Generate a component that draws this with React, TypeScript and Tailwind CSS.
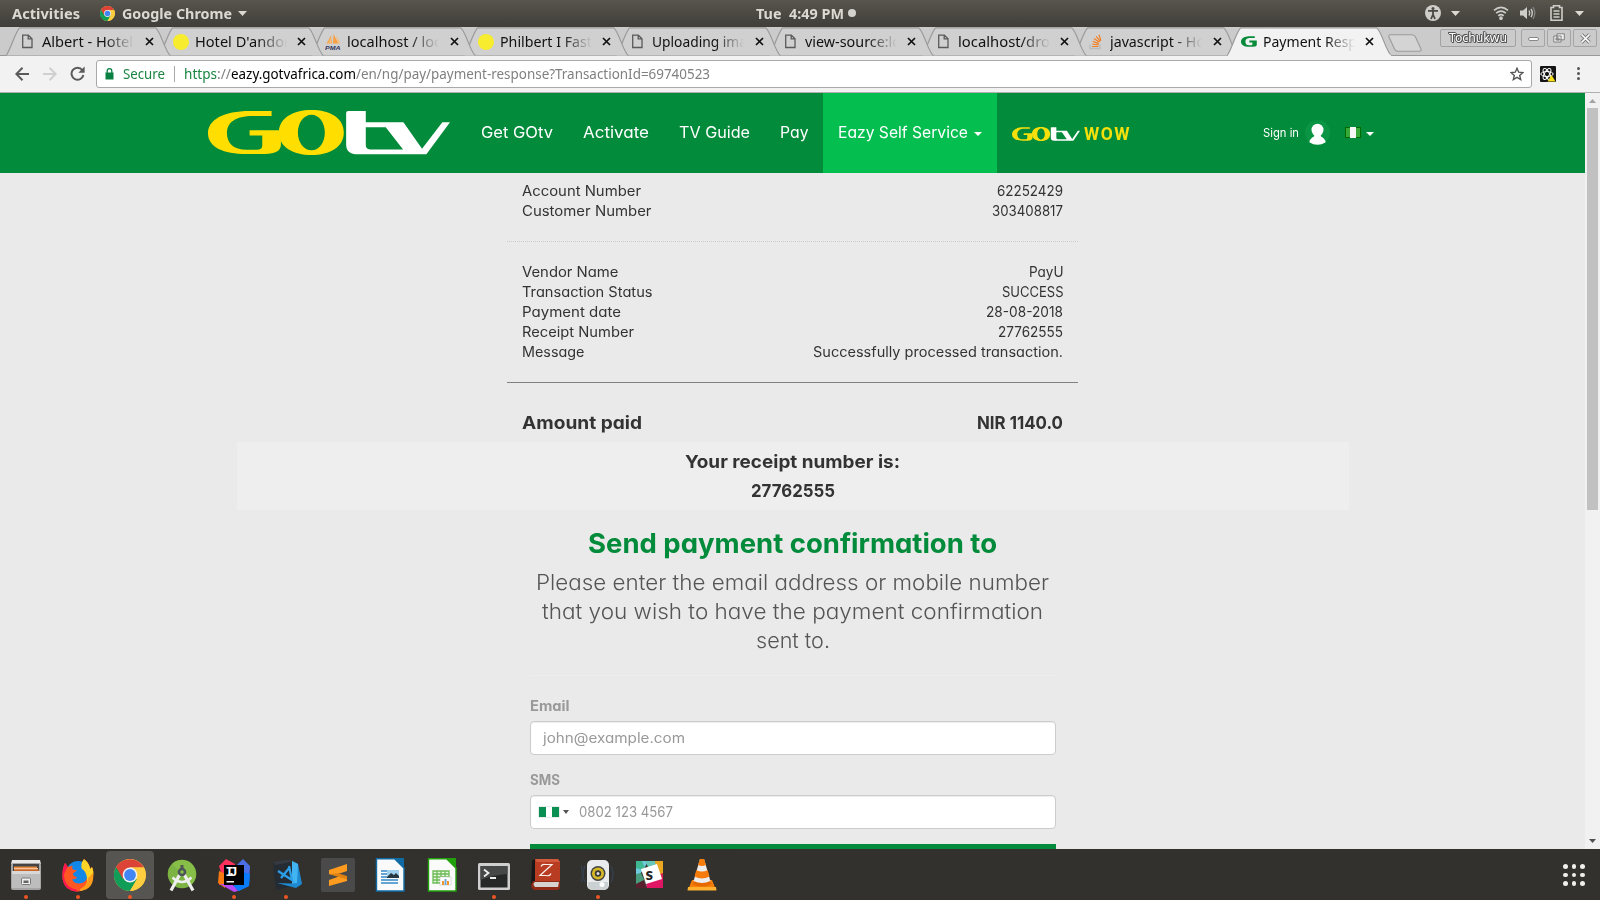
import { useLayoutEffect, useRef } from "react";
import type { ReactNode } from "react";

const POP = "font-['Inter','Open_Sans',sans-serif] [font-feature-settings:'cv11']";
const UBU = "font-['Noto_Sans','Open_Sans',sans-serif]";

/** Text widened or narrowed so that it fills exactly `w` pixels. */
function Fit({ w, children, className = "" }: { w: number; children: string; className?: string }) {
  const ref = useRef<HTMLSpanElement>(null);
  useLayoutEffect(() => {
    const el = ref.current;
    if (el && el.offsetWidth) {
      el.style.transform = "none";
      el.style.transform = `scaleX(${w / el.getBoundingClientRect().width})`;
    }
  }, [w, children]);
  return (
    <span className={`inline-block shrink-0 whitespace-pre text-left ${className}`} style={{ width: w }}>
      <span ref={ref} className="inline-block origin-left">{children}</span>
    </span>
  );
}

function ChromeLogo({ size }: { size: number }) {
  return (
    <svg width={size} height={size} viewBox="0 0 32 32">
      <circle cx="16" cy="16" r="16" fill="#ffcd40" />
      <path d="M16 16 2.1 8A16 16 0 0 0 16 32l7-12z" fill="#0f9d58" />
      <path d="M2.1 8A16 16 0 0 1 29.9 8.500H16L9 20z" fill="#db4437" />
      <path d="M29.900 8.500H16v7l7 4.500-7 12A16 16 0 0 0 29.900 8.500z" fill="#ffcd40" />
      <circle cx="16" cy="16" r="7.400" fill="#f1f1f1" />
      <circle cx="16" cy="16" r="5.900" fill="#4285f4" />
    </svg>
  );
}

function GotvLogo({ className, yellow = "#ffde00" }: { className: string; yellow?: string }) {
  return (
    <svg className={className} viewBox="54 60 727 136" preserveAspectRatio="none">
      <path fill={yellow} d="M245 63H180C100 63 54 90 54 130C54 172 100 193 170 193H225C258 193 273 182 273 165V121H179V137H217V168Q217 180 200 180H170C130 180 111 160 111 130C111 98 135 78 190 78H245Z" />
      <path fill={yellow} fillRule="evenodd" d="M267 128C267 84 310 60 365 60S462 84 462 128S420 196 365 196S267 172 267 128ZM324 128C324 158 342 182 365 182S405 158 405 128S388 74 365 74S324 98 324 128Z" />
      <path fill="#fff" fillRule="evenodd" d="M475 63H528V97H641L697 177L758 97H781L710 194H505C480 194 469 183 469 165V69Q469 63 475 63ZM528 112V165Q528 179 541 179H640L588 112Z" />
    </svg>
  );
}

const Caret = ({ className = "" }: { className?: string }) => (
  <svg className={className} viewBox="0 0 10 5" preserveAspectRatio="none"><path d="M0 0h10L5 5z" fill="currentColor" /></svg>
);

const PageIcon = () => (
  <svg className="ml-px h-[15px] w-[13px]" viewBox="0 0 13 15" fill="none" stroke="#5a5a5a" strokeWidth="1.300">
    <path d="M1.700 1.100h5.600l3.700 3.700v8.700H1.700zM7.200 1.100v3.800H11" />
  </svg>
);
const YellowDot = () => <span className="h-4 w-4 rounded-full bg-[#f7ec2e]" />;
const PmaIcon = () => (
  <svg className="h-4 w-4" viewBox="0 0 16 16">
    <path d="M6 1.500 7 9.500H1.500zM8.500 0l5 9.500H8z" fill="#f7a144" />
    <path d="M6 3v6.500H3zM11 1l4.500 8.500H13z" fill="#f9bd7a" />
    <text x="0" y="15.600" fontSize="6" fontWeight="700" fontStyle="italic" fill="#35365f" fontFamily="Liberation Sans" textLength="15.500" lengthAdjust="spacingAndGlyphs">PMA</text>
  </svg>
);
const StackIcon = () => (
  <svg className="h-4 w-4" viewBox="0 0 16 16" fill="none">
    <path d="M2 10.500v4h10v-4" stroke="#bcbbbb" strokeWidth="1.300" />
    <path d="M4 12.500h6.500M4.200 10l6.400.900M4.800 7.300l6 2.300M6 4.600l5.400 3.600M8.200 2.300l4 5M11 .800l1.900 6" stroke="#f48024" strokeWidth="1.200" />
  </svg>
);
const GIcon = () => (
  <svg className="h-[11px] w-4" viewBox="54 60 222 136" preserveAspectRatio="none">
    <path fill="#058b3a" d="M245 63H180C100 63 54 90 54 130C54 172 100 193 170 193H225C258 193 273 182 273 165V116H170V141H212V158Q212 174 195 174H170C130 174 116 160 116 130C116 98 135 84 190 84H245Z" />
  </svg>
);

const tabs: { title: string; w: number; icon: ReactNode }[] = [
  { title: "Albert - Hotel", w: 91, icon: <PageIcon /> },
  { title: "Hotel D'andor", w: 95, icon: <YellowDot /> },
  { title: "localhost / loc", w: 94, icon: <PmaIcon /> },
  { title: "Philbert I Fast", w: 92, icon: <YellowDot /> },
  { title: "Uploading ima", w: 95, icon: <PageIcon /> },
  { title: "view-source:lo", w: 96, icon: <PageIcon /> },
  { title: "localhost/dro", w: 92, icon: <PageIcon /> },
  { title: "javascript - Ho", w: 95, icon: <StackIcon /> },
  { title: "Payment Resp", w: 94, icon: <GIcon /> },
];

function Tab({ title, w, icon, active, index }: { title: string; w: number; icon: ReactNode; active: boolean; index: number }) {
  return (
    <div className="relative flex h-[29px] w-[152.6px] shrink-0 items-center pl-[14px]" style={{ zIndex: active ? 20 : 10 - index }}>
      <svg className="absolute top-0 left-0 h-[29px] w-[165px]" viewBox="0 0 165 29">
        <path d="M0 28.500C3 27 10 2.500 14 .800H149.500C154 2.500 160 27 164.500 28.500" fill={active ? "#f2f2f2" : "#d0d0d0"} stroke="#999" strokeWidth="1.200" />
        {active && <path d="M1 28.600H164" stroke="#f2f2f2" strokeWidth="1.500" />}
      </svg>
      <div className="relative flex items-center">
        <span className="flex w-[22px] items-center">{icon}</span>
        <span className="block w-[92px] overflow-hidden text-[14px] leading-[20px] text-[#111] [mask-image:linear-gradient(to_right,black_68%,transparent_100%)]">
          <Fit w={w}>{title}</Fit>
        </span>
        <svg className="ml-[10.5px] h-[9px] w-[9px]" viewBox="0 0 9 9"><path d="M1 1l7 7M8 1l-7 7" stroke="#111" strokeWidth="1.700" /></svg>
      </div>
    </div>
  );
}

function TopBar() {
  return (
    <div className="flex h-[27px] shrink-0 items-center bg-linear-to-b from-[#58554d] to-[#3f3e39] pb-[1px] pl-[12px] text-[14px] font-bold text-[#dcd9d3]">
      <Fit w={68}>Activities</Fit>
      <span className="ml-[20px] flex"><ChromeLogo size={15} /></span>
      <span className="ml-[7px] flex"><Fit w={110}>Google Chrome</Fit></span>
      <Caret className="ml-[6px] h-[5px] w-[9px]" />
      <span className="ml-[509px] flex"><Fit w={88}>Tue  4:49 PM</Fit></span>
      <span className="ml-[4px] h-2 w-2 rounded-full bg-[#d5d3ce]" />
      <div className="ml-[569px] flex items-center">
        <svg className="h-4 w-4" viewBox="0 0 16 16">
          <circle cx="8" cy="8" r="8" fill="#d0cec9" />
          <circle cx="8" cy="3.600" r="1.500" fill="#4b4943" />
          <path d="M3 5.800h10M8 6v4M8 9.500l-2 4.500M8 9.500l2 4.500" stroke="#4b4943" strokeWidth="1.800" />
        </svg>
        <Caret className="ml-[10px] h-[5px] w-[9px]" />
        <svg className="ml-[33px] h-[14px] w-[16px]" viewBox="0 0 16 14" fill="none" stroke="#d0cec9" strokeWidth="1.700">
          <path d="M1 4.300Q8-1.500 15 4.300M3.200 7.200Q8 3 12.800 7.200M5.300 9.800Q8 7.500 10.700 9.800" />
          <circle cx="8" cy="12.200" r="1" fill="#d0cec9" />
        </svg>
        <svg className="ml-[11px] h-[14px] w-[16px]" viewBox="0 0 16 14" fill="none">
          <path d="M0 4.500h3l4-3.500v12l-4-3.500H0z" fill="#d0cec9" />
          <path d="M9 4.500q1.500 2.500 0 5M11 2.800q2.600 4.200 0 8.400" stroke="#d0cec9" strokeWidth="1.400" />
          <path d="M13 1q3.600 6 0 12" stroke="#86847e" strokeWidth="1.300" />
        </svg>
        <svg className="ml-[14px] h-4 w-[13px]" viewBox="0 0 13 16" fill="none" stroke="#d0cec9" strokeWidth="1.600">
          <path d="M1 2.500h2.500V.800h6v1.700H12v12.700H1zM3.500 6h6M3.500 9h6M3.500 12h6" />
        </svg>
        <Caret className="ml-[12px] h-[5px] w-[9px]" />
      </div>
    </div>
  );
}

function TabStrip() {
  return (
    <div className="flex h-[29px] shrink-0 border-b border-[#999] bg-[#cbcbcb] pl-[6px]">
      {tabs.map((t, i) => <Tab key={t.title} {...t} index={i} active={i === 8} />)}
      <svg className="mt-[7px] ml-[9px] h-[18px] w-[36px] shrink-0" viewBox="0 0 36 18">
        <path d="M2.500.700H24Q26.500.700 27.500 3L33 15Q34 17.300 31 17.300H10Q7.500 17.300 6.500 15L1 3Q.300.700 2.500.700z" fill="#d4d4d4" stroke="#9b9b9b" strokeWidth="1.100" />
      </svg>
      <div className="mt-[2px] ml-[16px] flex gap-[2px]">
        <span className="mr-[3px] flex h-[18px] w-[76px] items-center justify-center rounded-[2px] border border-[#a2a2a2] text-[12.5px] leading-none text-white [text-shadow:1px_0_0_#555,-1px_0_0_#555,0_1px_0_#555,0_-1px_0_#555,1px_1px_0_#555,-1px_-1px_0_#555]">
          <Fit w={58}>Tochukwu</Fit>
        </span>
        <span className="flex h-[18px] w-[24px] items-center justify-center rounded-[2px] border border-[#a5a5a5]">
          <span className="mt-[2px] h-[4px] w-[11px] rounded-full border border-[#888] bg-white" />
        </span>
        <span className="flex h-[18px] w-[24px] items-center justify-center rounded-[2px] border border-[#a5a5a5]">
          <svg className="h-[10px] w-[12px]" viewBox="0 0 12 10"><path d="M4 .800h7.300v6H4zM.800 3h7.300v6H.800zM3 5h3v2H3z" fill="#eee" stroke="#777" strokeWidth=".9" /></svg>
        </span>
        <span className="flex h-[18px] w-[24px] items-center justify-center rounded-[2px] border border-[#a5a5a5]">
          <svg className="h-[11px] w-[11px]" viewBox="0 0 11 11"><path d="M1.500 1.500l8 8M9.500 1.500l-8 8" stroke="#777" strokeWidth="3.400" /><path d="M1.500 1.500l8 8M9.500 1.500l-8 8" stroke="#fff" strokeWidth="1.700" /></svg>
        </span>
      </div>
    </div>
  );
}

function Toolbar() {
  return (
    <div className="flex h-[37px] shrink-0 items-center border-b border-[#b0b0b0] bg-[#f2f2f2] pb-px pl-[15px]">
      <svg className="h-[14px] w-[14px]" viewBox="0 0 14 14" fill="none" stroke="#5a5a5a" strokeWidth="2"><path d="M14 7H1.500M7.500.800 1.300 7l6.200 6.200" /></svg>
      <svg className="ml-[14px] h-[14px] w-[14px]" viewBox="0 0 14 14" fill="none" stroke="#cfcfcf" strokeWidth="2"><path d="M0 7h12.500M6.500.800 12.700 7l-6.200 6.200" /></svg>
      <svg className="ml-[13px] h-[15px] w-[15px]" viewBox="0 0 15 15"><path d="M12.300 4A6 6 0 1 0 13.400 9" fill="none" stroke="#5a5a5a" strokeWidth="2" /><path d="M14.600.500v6.300H8.300z" fill="#5a5a5a" /></svg>
      <div className="ml-[11px] flex h-[28px] w-[1436px] items-center rounded-[3px] border border-[#a9a9a9] bg-white pl-[8px] text-[14px]">
        <svg className="h-[12px] w-[9px]" viewBox="0 0 9 12"><path d="M.500 4.500h8v7h-8z" fill="#0b8043" /><path d="M2.200 5V3a2.300 2.300 0 0 1 4.600 0v2" fill="none" stroke="#0b8043" strokeWidth="1.300" /></svg>
        <span className="ml-[9px] flex text-[#1a8540]"><Fit w={42}>Secure</Fit></span>
        <span className="mr-[9px] ml-[9px] h-[16px] w-px bg-[#aaa]" />
        <Fit w={33} className="text-[#1a8540]">https</Fit>
        <Fit w={14} className="text-[#808080]">://</Fit>
        <Fit w={125} className="text-black">eazy.gotvafrica.com</Fit>
        <Fit w={354} className="text-[#808080]">/en/ng/pay/payment-response?TransactionId=69740523</Fit>
        <svg className="ml-[800px] h-[14px] w-[14px]" viewBox="0 0 14 14"><path d="M7 1.300l1.700 3.900 4.200.400-3.200 2.800 1 4.200L7 10.400l-3.700 2.200 1-4.200L1.100 5.600l4.200-.400z" fill="none" stroke="#555" strokeWidth="1.400" /></svg>
      </div>
      <svg className="ml-[8px] h-4 w-4" viewBox="0 0 16 16">
        <rect width="16" height="16" rx="1" fill="#151515" />
        <g fill="none" stroke="#fff" strokeWidth="1"><ellipse cx="7" cy="8" rx="6.200" ry="2.500" /><ellipse cx="7" cy="8" rx="6.200" ry="2.500" transform="rotate(60 7 8)" /><ellipse cx="7" cy="8" rx="6.200" ry="2.500" transform="rotate(120 7 8)" /></g>
        <path d="M11.500 9l4 6.500h-8z" fill="#f5df1b" />
      </svg>
      <div className="ml-[21px] flex flex-col gap-[2px]">
        <span className="h-[3px] w-[3px] rounded-full bg-[#555]" />
        <span className="h-[3px] w-[3px] rounded-full bg-[#555]" />
        <span className="h-[3px] w-[3px] rounded-full bg-[#555]" />
      </div>
    </div>
  );
}

function SiteHeader() {
  return (
    <header className="flex h-[80px] w-full items-center bg-[#028b3a] pl-[208px] text-[16px] text-white">
      <GotvLogo className="mb-px h-[45px] w-[242px]" />
      <nav className="ml-[30.5px] flex h-full items-center">
        <span className="mb-[2px] flex"><Fit w={72}>Get GOtv</Fit></span>
        <span className="mb-[2px] ml-[30px] flex"><Fit w={66}>Activate</Fit></span>
        <span className="mb-[2px] ml-[30px] flex"><Fit w={71}>TV Guide</Fit></span>
        <span className="mb-[2px] ml-[30px] flex"><Fit w={28.5}>Pay</Fit></span>
        <span className="ml-[15px] flex h-full w-[174px] items-center bg-[#04bf50] pb-[2px] pl-[15px]">
          <Fit w={130}>Eazy Self Service</Fit>
          <Caret className="mt-[3px] ml-[6px] h-[4px] w-[8px]" />
        </span>
        <span className="ml-[15px] flex items-center">
          <GotvLogo className="mt-[2px] h-[14px] w-[68px]" yellow="#f5e00c" />
          <span className="mt-[1px] ml-[4px] flex font-['Roboto',sans-serif] text-[18px] leading-none font-bold tracking-[1.5px] text-[#f5e00c]"><Fit w={47}>WOW</Fit></span>
        </span>
      </nav>
      <div className="mb-px ml-[131.5px] flex items-center text-[11.5px]">
        <Fit w={36}>Sign in</Fit>
        <svg className="ml-[6px] h-[25px] w-[25px]" viewBox="0 0 25 25">
          <circle cx="12.500" cy="12.500" r="12.500" fill="#0a9544" />
          <ellipse cx="12.500" cy="10" rx="6" ry="6.200" fill="#fff" />
          <path d="M9.500 14h6l.500 2.500c2.500 1 4.500 3.500 4.700 5.800q-8.200 5-16.400 0c.200-2.300 2.200-4.800 4.700-5.800z" fill="#fff" />
        </svg>
        <svg className="ml-[15px] h-[11px] w-[16px]" viewBox="0 0 16 11">
          <rect width="16" height="11" fill="#006b00" />
          <path d="M1 1h4v9H1zM11 1h4v9h-4z" fill="#38a838" />
          <path d="M5 0h6v11H5z" fill="#f7f7f7" />
        </svg>
        <Caret className="mt-[3px] ml-[5px] h-[4px] w-[8px]" />
      </div>
    </header>
  );
}

function Row({ label, lw, value, vw }: { label: string; lw: number; value: string; vw: number }) {
  return (
    <div className="flex h-[20px] items-center justify-between">
      <Fit w={lw}>{label}</Fit>
      <Fit w={vw}>{value}</Fit>
    </div>
  );
}

function Receipt() {
  return (
    <main className="flex w-[1585px] flex-col items-center bg-[#eaeaea] text-[14px] leading-[20px] text-[#333] *:shrink-0">
      <SiteHeader />
      <section className="w-[571px] border-b border-dotted border-[#ccc] px-[15px] pt-[8px] pb-[20px]">
        <Row label="Account Number" lw={119} value="62252429" vw={66} />
        <Row label="Customer Number" lw={129.500} value="303408817" vw={71} />
      </section>
      <section className="mt-[20px] w-[571px] border-b border-[#808280] px-[15px] pb-[20px]">
        <Row label="Vendor Name" lw={96.500} value="PayU" vw={34.500} />
        <Row label="Transaction Status" lw={130.500} value="SUCCESS" vw={61.500} />
        <Row label="Payment date" lw={99} value="28-08-2018" vw={77} />
        <Row label="Receipt Number" lw={112} value="27762555" vw={65} />
        <Row label="Message" lw={62.500} value="Successfully processed transaction." vw={250} />
      </section>
      <section className="mt-[30px] w-[571px] px-[15px] text-[18px] font-bold">
        <Row label="Amount paid" lw={120} value="NIR 1140.0" vw={86} />
      </section>
      <section className="mt-[9px] flex h-[68px] w-[1112px] flex-col items-center bg-[#eee] pt-[5px] text-[18px] leading-[29px] font-bold">
        <Fit w={215}>Your receipt number is:</Fit>
        <Fit w={84}>27762555</Fit>
      </section>
      <h2 className="mt-[18px] flex h-[32px] items-center text-[27px] leading-[32px] font-bold text-[#028b3a]"><Fit w={409}>Send payment confirmation to</Fit></h2>
      <div className="mt-[8px] flex flex-col items-center text-[21.5px] leading-[29px] font-light text-[#555]">
        <Fit w={513}>Please enter the email address or mobile number</Fit>
        <Fit w={501}>that you wish to have the payment confirmation</Fit>
        <Fit w={74}>sent to.</Fit>
      </div>
      <form className="mt-[20px] flex w-[526px] flex-col border-t border-[#eee] pt-[20px]">
        <label className="flex h-[20px] font-bold text-[#999]"><Fit w={39.500}>Email</Fit></label>
        <div className="mt-[5px] flex h-[34px] items-center rounded-[4px] border border-[#ccc] bg-white pl-[12px] text-[#999] shadow-[inset_0_1px_1px_rgba(0,0,0,0.075)]"><Fit w={142}>john@example.com</Fit></div>
        <label className="mt-[15px] flex h-[20px] font-bold text-[#999]"><Fit w={30}>SMS</Fit></label>
        <div className="mt-[5px] flex h-[34px] items-center rounded-[4px] border border-[#ccc] bg-white pl-[8px] text-[#999] shadow-[inset_0_1px_1px_rgba(0,0,0,0.075)]">
          <span className="flex h-[10px] w-[20px] bg-white shadow-[0_0_1px_#888]"><span className="w-[7px] bg-[#0a8f53]" /><span className="ml-[6px] w-[7px] bg-[#0a8f53]" /></span>
          <Caret className="ml-[4px] h-[4px] w-[6px] text-[#555]" />
          <span className="ml-[10px] flex"><Fit w={94}>0802 123 4567</Fit></span>
        </div>
        <div className="mt-[15px] h-[34px] bg-[#028b3a]" />
      </form>
    </main>
  );
}

function Scrollbar() {
  return (
    <div className="flex w-[15px] flex-col items-center bg-[#f1f1f1] pt-[6px] pb-[6px] text-[#505050]">
      <Caret className="h-[4px] w-[7px] rotate-180 text-[#a3a3a3]" />
      <div className="mt-[5px] h-[402px] w-[11px] bg-[#c1c1c1]" />
      <Caret className="mt-auto h-[4px] w-[7px]" />
    </div>
  );
}

const dock: { run?: boolean; active?: boolean; icon: ReactNode }[] = [
  { run: true, icon: <g>
    <path d="M3 2h28l1 4H2z" fill="#e8e8e8" /><rect x="2" y="5" width="30" height="27" rx="2" fill="#a5a5a5" />
    <path d="M4 6h26v8H4z" fill="#444" /><path d="M5 8.500h23V14H5z" fill="#e6883d" /><path d="M5 10h24v1.500H5z" fill="#f7c79a" /><path d="M5 11.500h25V14H5z" fill="#c7652b" />
    <path d="M3 13h28v17H3z" fill="#bdbdbd" /><path d="M3 13h28v3H3z" fill="#d8d8d8" /><rect x="12.500" y="20" width="9" height="6.500" rx="1" fill="#eee" stroke="#777" /><path d="M14.500 22.500h5V25h-5z" fill="#666" /></g> },
  { run: true, icon: <g>
    <circle cx="17" cy="18.500" r="14" fill="#2a2a8c" /><circle cx="17" cy="14.500" r="11.500" fill="#1187e8" />
    <path d="M4 5q2 2 2.500 4l5-1.500q-1 3 .500 4l4 1-4 3q0 3 4 3.500-1 3-5 2 2 5 8 4.500 6-1 7-6 .500-5-3.500-8Q21 5 23 1q6 5 6 10l2-2q2 4 1 10-2 13-15 14.500Q3 33 1.500 20 1 11 4 5z" fill="#ff5722" />
    <path d="M4 5q2 2 2.500 4L3 16q0 13 12 15.500l2 2Q3 33 1.500 20 1 11 4 5z" fill="#ff1750" />
    <path d="M23 1q6 5 6 10l2-2q2 4 1 10-2 12-13 14 8-5 7-13-1-7-5-9Q19 6 23 1z" fill="#ffd426" />
    <path d="M19 31q8-4 8-11l5-5q2 16-13 18z" fill="#ff9c1a" /></g> },
  { run: true, active: true, icon: <g transform="translate(1 1)">
    <circle cx="16" cy="16" r="16" fill="#ffcd40" /><path d="M16 16 2.100 8A16 16 0 0 0 16 32l7-12z" fill="#0f9d58" /><path d="M2.100 8A16 16 0 0 1 29.900 8.500H16L9 20z" fill="#db4437" /><path d="M29.900 8.500H16v7l7 4.500-7 12A16 16 0 0 0 29.900 8.500z" fill="#ffcd40" /><circle cx="16" cy="16" r="7.400" fill="#f1f1f1" /><circle cx="16" cy="16" r="5.900" fill="#4285f4" /></g> },
  { icon: <g>
    <circle cx="17" cy="16" r="14.300" fill="#7cb342" /><path d="M7 6l20 20a14.300 14.300 0 0 0-9-24Q11 2 7 6z" fill="#8bc34a" opacity=".7" />
    <path d="M15 16 6 32.500M19 16l9 16.500" stroke="#eee" strokeWidth="3.200" /><path d="M7.500 19.500q9.500 9 19 0" stroke="#eee" strokeWidth="2.500" fill="none" />
    <rect x="15.500" y="7" width="3" height="4" fill="#555" /><circle cx="17" cy="14" r="4.300" fill="#4d5459" /><circle cx="17" cy="14" r="1.700" fill="#8bc34a" /></g> },
  { run: true, icon: <g>
    <path d="M2 8 9 1l9 5-2 12-6 9-8 0 3-9z" fill="#fe315d" /><path d="M2 13l7 3-1 14-7-5z" fill="#f97a12" /><path d="M20 7l6-6 7 7-1 20-11 5z" fill="#4a6fe8" /><path d="M26 14l7 2-1 12-10 5-6-4z" fill="#087cfa" /><path d="M3 26h12l6 7-4 1z" fill="#b74af7" />
    <rect x="7" y="7" width="20" height="20" fill="#000" /><text x="8.500" y="18" fontFamily="Liberation Mono" fontWeight="700" fontSize="13" textLength="12" fill="#fff">IJ</text><path d="M9.500 23h7.500v1.500H9.500z" fill="#fff" /></g> },
  { run: true, icon: <g>
    <path d="M4 4 22 1l2 27-17 4z" fill="#242b33" /><path d="M4 4 22 1v3L6 7z" fill="#353a40" />
    <path d="m23 3 6 3 4 20-6 4L8 25l15 .500z" fill="#1e8ad1" /><path d="m23 3 6 3-1 19-5 .500z" fill="#43b4f2" />
    <path d="m20 8 3 14-14-9M21 9l-9 11" stroke="#2b9fe8" strokeWidth="2.300" fill="none" /></g> },
  { icon: <g>
    <rect width="34" height="34" rx="2" fill="#4a4a4a" /><path d="M8 12l18-6v7l-9 3 9 3v4L8 28v-6l10-3.500L8 16z" fill="#ff9c1f" /><path d="m8 16 18 5.500V18l-9-2.800z" fill="#e08310" /></g> },
  { icon: <g>
    <path d="M3.500.700H22l9 9V33h-27.500z" fill="#fafafa" stroke="#106ba5" strokeWidth="1.400" /><path d="M20 0h11v11z" fill="#106ba5" />
    <path d="M8 13h6M8 16h6M8 19h6M8 22h17M8 25h17" stroke="#65a5d6" strokeWidth="2" /><rect x="14" y="12" width="12" height="8" fill="#9fd0ee" /><path d="m14 19 4-4 3 2 2-2 3 3v2H14z" fill="#263840" /></g> },
  { icon: <g>
    <path d="M3.500.700H22l9 9V33h-27.500z" fill="#fafafa" stroke="#22a00c" strokeWidth="1.400" /><path d="M20 0h11v11z" fill="#22a00c" />
    <path d="M8 13h16v12H8zM8 16h16M8 19h16M8 22h16M12 13v12M16 13v12M20 13v12" fill="#e8f6e2" stroke="#6cba55" strokeWidth="1.300" /><rect x="15" y="19" width="11" height="8" fill="#fff" stroke="#bbb" strokeWidth=".5" /><path d="M17 23h2v4h-2z" fill="#f39430" /><path d="M19.500 21h2v6h-2z" fill="#6aa7d8" /><path d="M22 23h2v4h-2z" fill="#f39430" /></g> },
  { run: true, icon: <g>
    <rect x="1" y="5" width="32" height="27" rx="1.500" fill="#cfcfcf" /><rect x="3.500" y="8" width="27" height="21.500" fill="#262828" /><path d="M3.500 8h27v8q-15 1-27 6z" fill="#464848" />
    <path d="m7 11.500 4.500 3.500L7 18.500M13 20h6" stroke="#eee" strokeWidth="1.800" fill="none" /></g> },
  { icon: <g>
    <path d="M3 3q2-2 4-2v27H2z" fill="#171717" /><path d="M6 1h23l2 3v20H6z" fill="#b83c22" /><path d="M6 1h23l2 3H8z" fill="#d4583a" /><path d="M4 23h27v7q-1 2-3 2H5q-3-2-3-5z" fill="#8f2a17" /><path d="M6 24h24l-1 5H6q-3-3 0-5z" fill="#d5d2cf" />
    <path d="M12 8.500q1-2.500 4-2h7L11 17.500h6q4 1 5-2" stroke="#fbeee9" strokeWidth="1.200" fill="none" /></g> },
  { run: true, icon: <g>
    <path d="M4 8q-4 8 0 16M1 8q-3 8 0 16M30 8q4 8 0 16" stroke="#34404f" strokeWidth="1.500" fill="none" /><rect x="6" y="2" width="22" height="30" rx="5" fill="#e9ebec" /><path d="M7 24h20v3q0 5-5 5H12q-5 0-5-5z" fill="#cbd0d2" />
    <circle cx="17" cy="15.500" r="7.500" fill="#444" /><circle cx="17" cy="15.500" r="6" fill="#d7b928" /><circle cx="17" cy="15.500" r="3.200" fill="#383838" /><circle cx="17" cy="15.500" r="1.500" fill="#ddd" /><circle cx="21" cy="26.500" r="2.500" fill="#fff" /></g> },
  { icon: <g>
    <path d="M3 3h12l-5 10-7 6z" fill="#6ecadc" /><path d="M3 3h6l4 10-10-3z" fill="#3eb890" /><path d="M12 3h18v5l-13 5z" fill="#67c6b5" /><path d="M22 3h8v15l-6-2z" fill="#e9a820" /><path d="M24 17l6-2v15h-6z" fill="#d8234f" /><path d="M10 26l20-6v10H10z" fill="#e01563" /><path d="M3 16l5-1 6 13-2 2H3z" fill="#4a9c7e" /><path d="m3 26 8-4 3 8H3z" fill="#57202f" />
    <path d="m8 11 16-5 5 15-16 5z" fill="#fff" /><text x="12.500" y="22" fontSize="17" fontWeight="900" fill="#222" fontFamily="Lato">s</text></g> },
  { icon: <g>
    <path d="M7 22h20l4 10H3z" fill="#f57f0a" /><path d="M3 29h28l.500 3.500h-29z" fill="#ffb02e" /><path d="M15 1h4l7 24q-9 5-18 0z" fill="#ededed" />
    <path d="M15 1h4l2 6q-4 2-8 0z" fill="#f57c0a" /><path d="M11.300 12q5.700 3 11.400 0l1.800 6.500q-7.500 4-15 0z" fill="#f57c0a" /><path d="M8.500 23q8.500 4 17 0l1 3q-9.500 5-19 0z" fill="#e66900" /></g> },
];

function Dock() {
  return (
    <div className="flex h-[51px] shrink-0 items-start bg-linear-to-r from-[#32302c] via-[#33312d] to-[#32312d]">
      {dock.map((d, i) => (
        <div key={i} className="flex h-[51px] w-[52px] justify-center pt-[2px]">
          <div className={`flex h-[48px] w-[48px] flex-col items-center rounded-[4px] pt-[7px] ${d.active ? "bg-[#565551]" : ""}`}>
            <svg className="h-[34px] w-[34px]" viewBox="0 0 34 34">{d.icon}</svg>
            {d.run && <span className="mt-[3px] h-[4px] w-[4px] rounded-full bg-[#ee5622]" />}
          </div>
        </div>
      ))}
      <div className="mt-[15px] ml-[835px] grid grid-cols-3 gap-[4px]">
        {Array.from({ length: 9 }, (_, i) => <span key={i} className="h-[4.5px] w-[4.5px] rounded-full bg-[#f0efeb]" />)}
      </div>
    </div>
  );
}

export default function App() {
  return (
    <div className={`flex h-[900px] w-[1600px] flex-col overflow-hidden ${UBU}`}>
      <TopBar />
      <TabStrip />
      <Toolbar />
      <div className={`flex h-[756px] shrink-0 overflow-hidden ${POP}`}>
        <Receipt />
        <Scrollbar />
      </div>
      <Dock />
    </div>
  );
}
